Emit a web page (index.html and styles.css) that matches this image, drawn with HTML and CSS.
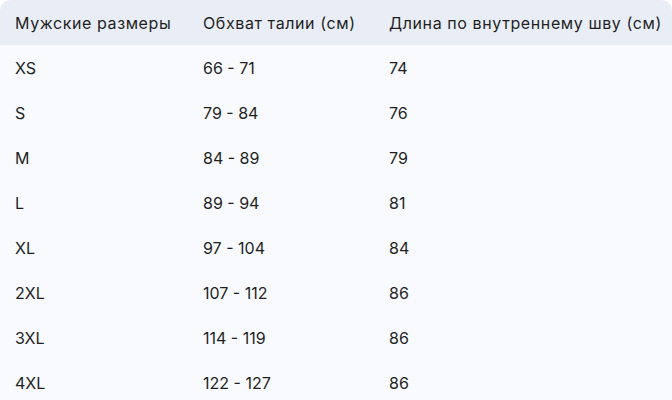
FILE: index.html
```html
<!DOCTYPE html>
<html lang="ru">
<head>
<meta charset="utf-8">
<link rel="stylesheet" href="styles.css">
</head>
<body>
<table class="sizes">
  <thead>
    <tr><th>Мужские размеры</th><th>Обхват талии (см)</th><th>Длина по внутреннему шву (см)</th></tr>
  </thead>
  <tbody>
    <tr><td>XS</td><td>66 - 71</td><td>74</td></tr>
    <tr><td>S</td><td>79 - 84</td><td>76</td></tr>
    <tr><td>M</td><td>84 - 89</td><td>79</td></tr>
    <tr><td>L</td><td>89 - 94</td><td>81</td></tr>
    <tr><td>XL</td><td>97 - 104</td><td>84</td></tr>
    <tr><td>2XL</td><td>107 - 112</td><td>86</td></tr>
    <tr><td>3XL</td><td>114 - 119</td><td>86</td></tr>
    <tr><td>4XL</td><td>122 - 127</td><td>86</td></tr>
  </tbody>
</table>
</body>
</html>
```
FILE: styles.css
```css
html, body {
  margin: 0;
  padding: 0;
  background: #ffffff;
}
body {
  font-family: Inter, Roboto, sans-serif;
  font-size: 16px;
  color: #1f1f1f;
}
.sizes {
  width: 672px;
  border-collapse: separate;
  border-spacing: 0;
  background: #f8fafd;
  border-radius: 10px 10px 0 0;
  overflow: hidden;
}
.sizes th, .sizes td {
  height: 45px;
  padding: 0 0 0 15px;
  text-align: left;
  font-weight: 400;
  vertical-align: middle;
  box-sizing: border-box;
  white-space: nowrap;
}
.sizes th {
  background: #e9eef6;
  letter-spacing: 0.6px;
}
.sizes th:first-child { border-top-left-radius: 10px; }
.sizes th:last-child { border-top-right-radius: 10px; }
.sizes th:nth-child(1), .sizes td:nth-child(1) { width: 188px; }
.sizes th:nth-child(2), .sizes td:nth-child(2) { width: 186px; }
```
